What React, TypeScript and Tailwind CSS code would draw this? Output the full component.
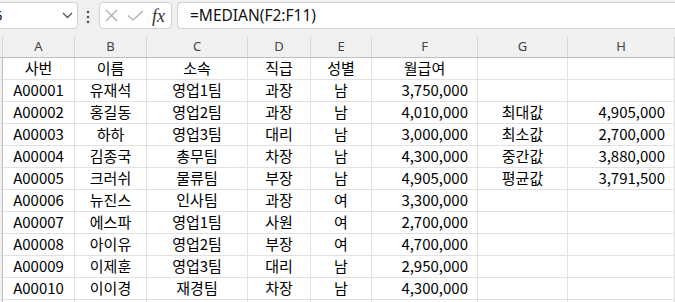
const cols = ['A', 'B', 'C', 'D', 'E', 'F', 'G', 'H'];

const rows: string[][] = [
  ['사번', '이름', '소속', '직급', '성별', '월급여', '', ''],
  ['A00001', '유재석', '영업1팀', '과장', '남', '3,750,000', '', ''],
  ['A00002', '홍길동', '영업2팀', '과장', '남', '4,010,000', '최대값', '4,905,000'],
  ['A00003', '하하', '영업3팀', '대리', '남', '3,000,000', '최소값', '2,700,000'],
  ['A00004', '김종국', '총무팀', '차장', '남', '4,300,000', '중간값', '3,880,000'],
  ['A00005', '크러쉬', '물류팀', '부장', '남', '4,905,000', '평균값', '3,791,500'],
  ['A00006', '뉴진스', '인사팀', '과장', '여', '3,300,000', '', ''],
  ['A00007', '에스파', '영업1팀', '사원', '여', '2,700,000', '', ''],
  ['A00008', '아이유', '영업2팀', '부장', '여', '4,700,000', '', ''],
  ['A00009', '이제훈', '영업3팀', '대리', '남', '2,950,000', '', ''],
  ['A00010', '이이경', '재경팀', '차장', '남', '4,300,000', '', ''],
  ['', '', '', '', '', '', '', ''],
];

const gridCols = 'grid grid-cols-[3px_72px_72px_101px_63px_61px_106px_90px_107px]';

const isNumber = (s: string) => /^[\d,]+$/.test(s);

const Cell = ({ value }: { value: string }) => (
  <div
    className={`flex h-[22px] items-center border-r border-b border-[#e1e1e1] ${
      isNumber(value) ? 'justify-end pr-[9px]' : 'justify-center'
    }`}
  >
    {value}
  </div>
);

const App = () => {
  return (
    <div className="w-[675px] h-[302px] overflow-hidden bg-white font-['Noto_Sans',sans-serif]">
      {/* Formula bar */}
      <div className="flex h-[37px] items-start bg-[#f0f0f0] pt-[2px]">
        <div className="ml-[-40px] flex h-[27px] w-[118px] items-center rounded-[4px] border border-[#d1d1d1] bg-white pl-[22px] pr-[5px] text-[15px] text-[#222]">
          <span className="flex-1">H5</span>
          <svg width="11" height="7" viewBox="0 0 11 7" className="mr-[-1px]">
            <path d="M1 1l4.5 4.5L10 1" fill="none" stroke="#555" strokeWidth="1.3" />
          </svg>
        </div>
        <svg width="4" height="14" viewBox="0 0 4 14" className="ml-[8px] mt-[8px]">
          <circle cx="2" cy="2" r="1.3" fill="#555" />
          <circle cx="2" cy="7" r="1.3" fill="#555" />
          <circle cx="2" cy="12" r="1.3" fill="#555" />
        </svg>
        <div className="ml-[9px] flex h-[27px] w-[73px] items-center rounded-[4px] border border-[#d1d1d1] bg-white pl-[5px]">
          <svg width="13" height="13" viewBox="0 0 13 13">
            <path d="M1 1l11 11M12 1L1 12" fill="none" stroke="#ababab" strokeWidth="1.1" />
          </svg>
          <svg width="17" height="11" viewBox="0 0 17 11" className="ml-[9px]">
            <path d="M1 5.5l5 4.5L16 1" fill="none" stroke="#ababab" strokeWidth="1.1" />
          </svg>
          <span className="ml-[8px] font-['Liberation_Serif',serif] text-[18px] italic leading-none text-[#333]">
            fx
          </span>
        </div>
        <div className="ml-[5px] flex h-[27px] flex-1 items-center rounded-l-[4px] border border-r-0 border-[#d1d1d1] bg-white pl-[12px] text-[15.5px] text-[#111]">
          =MEDIAN(F2:F11)
        </div>
      </div>

      {/* Column headers */}
      <div className={`${gridCols} h-[21px] border-b border-[#bfbfbf] bg-[#f0f0f0] text-[13px] text-[#444]`}>
        <div className="border-r border-[#d6d6d6]" />
        {cols.map((c) => (
          <div key={c} className="flex items-center justify-center border-r border-[#d6d6d6]">
            {c}
          </div>
        ))}
      </div>

      {/* Sheet */}
      <div className="font-['Noto_Sans_CJK_KR',sans-serif] text-[15px] text-black">
        {rows.map((r, i) => (
          <div key={i} className={gridCols}>
            <div className="h-[22px] border-r border-b border-r-[#bdbdbd] border-b-[#e1e1e1] bg-[#f0f0f0]" />
            {r.map((v, j) => (
              <Cell key={j} value={v} />
            ))}
          </div>
        ))}
      </div>
    </div>
  );
};

export default App;
